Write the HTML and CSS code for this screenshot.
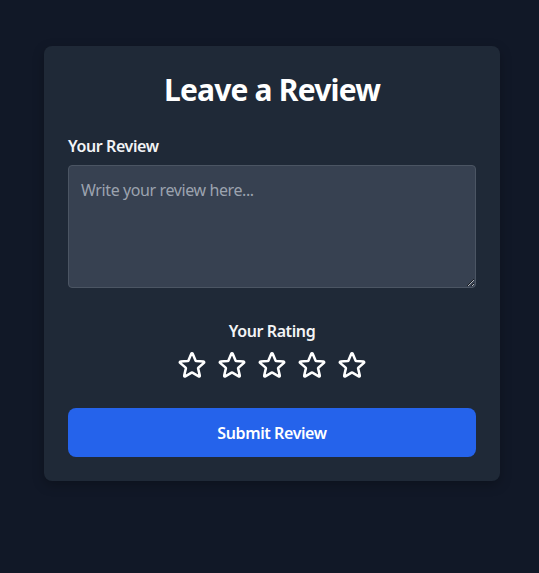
FILE: index.html
```
<!DOCTYPE html>
<html lang="en">
<head>
<meta charset="utf-8">
<title>Leave a Review</title>
<link rel="stylesheet" href="styles.css">
</head>
<body>
<main class="card">
  <h1 class="title">Leave a Review</h1>
  <form class="form" onsubmit="return false">
    <label class="label" for="review">Your Review</label>
    <textarea id="review" class="textarea" rows="4" placeholder="Write your review here..."></textarea>
    <div class="rating">
      <span class="rating-label">Your Rating</span>
      <div class="stars">
        <svg class="star" viewBox="0 0 24 24" fill="none" stroke="currentColor" stroke-width="1.9"><path stroke-linecap="round" stroke-linejoin="round" d="M11.48 3.499a.562.562 0 011.04 0l2.125 5.111a.563.563 0 00.475.345l5.518.442c.499.04.701.663.321 1.002l-4.204 3.602a.563.563 0 00-.182.557l1.285 5.385a.562.562 0 01-.84.61l-4.725-2.885a.563.563 0 00-.586 0L6.982 20.54a.562.562 0 01-.84-.61l1.285-5.386a.562.562 0 00-.182-.557l-4.204-3.602a.563.563 0 01.321-1.002l5.518-.442a.563.563 0 00.475-.345L11.48 3.5z"/></svg>
        <svg class="star" viewBox="0 0 24 24" fill="none" stroke="currentColor" stroke-width="1.9"><path stroke-linecap="round" stroke-linejoin="round" d="M11.48 3.499a.562.562 0 011.04 0l2.125 5.111a.563.563 0 00.475.345l5.518.442c.499.04.701.663.321 1.002l-4.204 3.602a.563.563 0 00-.182.557l1.285 5.385a.562.562 0 01-.84.61l-4.725-2.885a.563.563 0 00-.586 0L6.982 20.54a.562.562 0 01-.84-.61l1.285-5.386a.562.562 0 00-.182-.557l-4.204-3.602a.563.563 0 01.321-1.002l5.518-.442a.563.563 0 00.475-.345L11.48 3.5z"/></svg>
        <svg class="star" viewBox="0 0 24 24" fill="none" stroke="currentColor" stroke-width="1.9"><path stroke-linecap="round" stroke-linejoin="round" d="M11.48 3.499a.562.562 0 011.04 0l2.125 5.111a.563.563 0 00.475.345l5.518.442c.499.04.701.663.321 1.002l-4.204 3.602a.563.563 0 00-.182.557l1.285 5.385a.562.562 0 01-.84.61l-4.725-2.885a.563.563 0 00-.586 0L6.982 20.54a.562.562 0 01-.84-.61l1.285-5.386a.562.562 0 00-.182-.557l-4.204-3.602a.563.563 0 01.321-1.002l5.518-.442a.563.563 0 00.475-.345L11.48 3.5z"/></svg>
        <svg class="star" viewBox="0 0 24 24" fill="none" stroke="currentColor" stroke-width="1.9"><path stroke-linecap="round" stroke-linejoin="round" d="M11.48 3.499a.562.562 0 011.04 0l2.125 5.111a.563.563 0 00.475.345l5.518.442c.499.04.701.663.321 1.002l-4.204 3.602a.563.563 0 00-.182.557l1.285 5.385a.562.562 0 01-.84.61l-4.725-2.885a.563.563 0 00-.586 0L6.982 20.54a.562.562 0 01-.84-.61l1.285-5.386a.562.562 0 00-.182-.557l-4.204-3.602a.563.563 0 01.321-1.002l5.518-.442a.563.563 0 00.475-.345L11.48 3.5z"/></svg>
        <svg class="star" viewBox="0 0 24 24" fill="none" stroke="currentColor" stroke-width="1.9"><path stroke-linecap="round" stroke-linejoin="round" d="M11.48 3.499a.562.562 0 011.04 0l2.125 5.111a.563.563 0 00.475.345l5.518.442c.499.04.701.663.321 1.002l-4.204 3.602a.563.563 0 00-.182.557l1.285 5.385a.562.562 0 01-.84.61l-4.725-2.885a.563.563 0 00-.586 0L6.982 20.54a.562.562 0 01-.84-.61l1.285-5.386a.562.562 0 00-.182-.557l-4.204-3.602a.563.563 0 01.321-1.002l5.518-.442a.563.563 0 00.475-.345L11.48 3.5z"/></svg>
      </div>
    </div>
    <button class="submit" type="submit">Submit Review</button>
  </form>
</main>
</body>
</html>
```

FILE: styles.css
```
* { box-sizing: border-box; }
html, body { height: 100%; }
body {
  margin: 0;
  background: #111827;
  font-family: "Noto Sans", "Open Sans", sans-serif;
  color: #f9fafb;
  padding-top: 46px;
}
.card {
  width: 456px;
  margin-left: 44px;
  background: #1f2937;
  border-radius: 8px;
  padding: 24px;
  box-shadow: 0 4px 12px rgba(0,0,0,0.25);
}
.title {
  margin: 0 0 24px;
  font-size: 30px;
  line-height: 40px;
  font-weight: 700;
  letter-spacing: -0.8px;
  text-align: center;
  color: #ffffff;
}
.form { display: flex; flex-direction: column; }
.label {
  font-size: 16px;
  line-height: 24px;
  font-weight: 600;
  letter-spacing: -0.4px;
  color: #f3f4f6;
  margin-bottom: 7px;
}
.textarea {
  display: block;
  width: 100%;
  height: 123px;
  background: #374151;
  border: 1px solid #4b5563;
  border-radius: 4px;
  padding: 12px;
  font-family: inherit;
  font-size: 16px;
  line-height: 24px;
  letter-spacing: -0.4px;
  color: #f9fafb;
  resize: vertical;
  outline: none;
}
.textarea::placeholder { color: #9ca3af; }
.rating {
  margin-top: 31px;
  display: flex;
  flex-direction: column;
  align-items: center;
  gap: 6px;
}
.rating-label {
  font-size: 16px;
  line-height: 24px;
  font-weight: 600;
  letter-spacing: -0.4px;
  color: #f3f4f6;
}
.stars { display: flex; gap: 8px; }
.star { width: 32px; height: 32px; color: #ffffff; display: block; }
.submit {
  margin-top: 27px;
  height: 49px;
  background: #2563eb;
  border: none;
  border-radius: 8px;
  color: #ffffff;
  font-family: inherit;
  font-size: 16px;
  font-weight: 600;
  letter-spacing: -0.4px;
  cursor: pointer;
}
```
